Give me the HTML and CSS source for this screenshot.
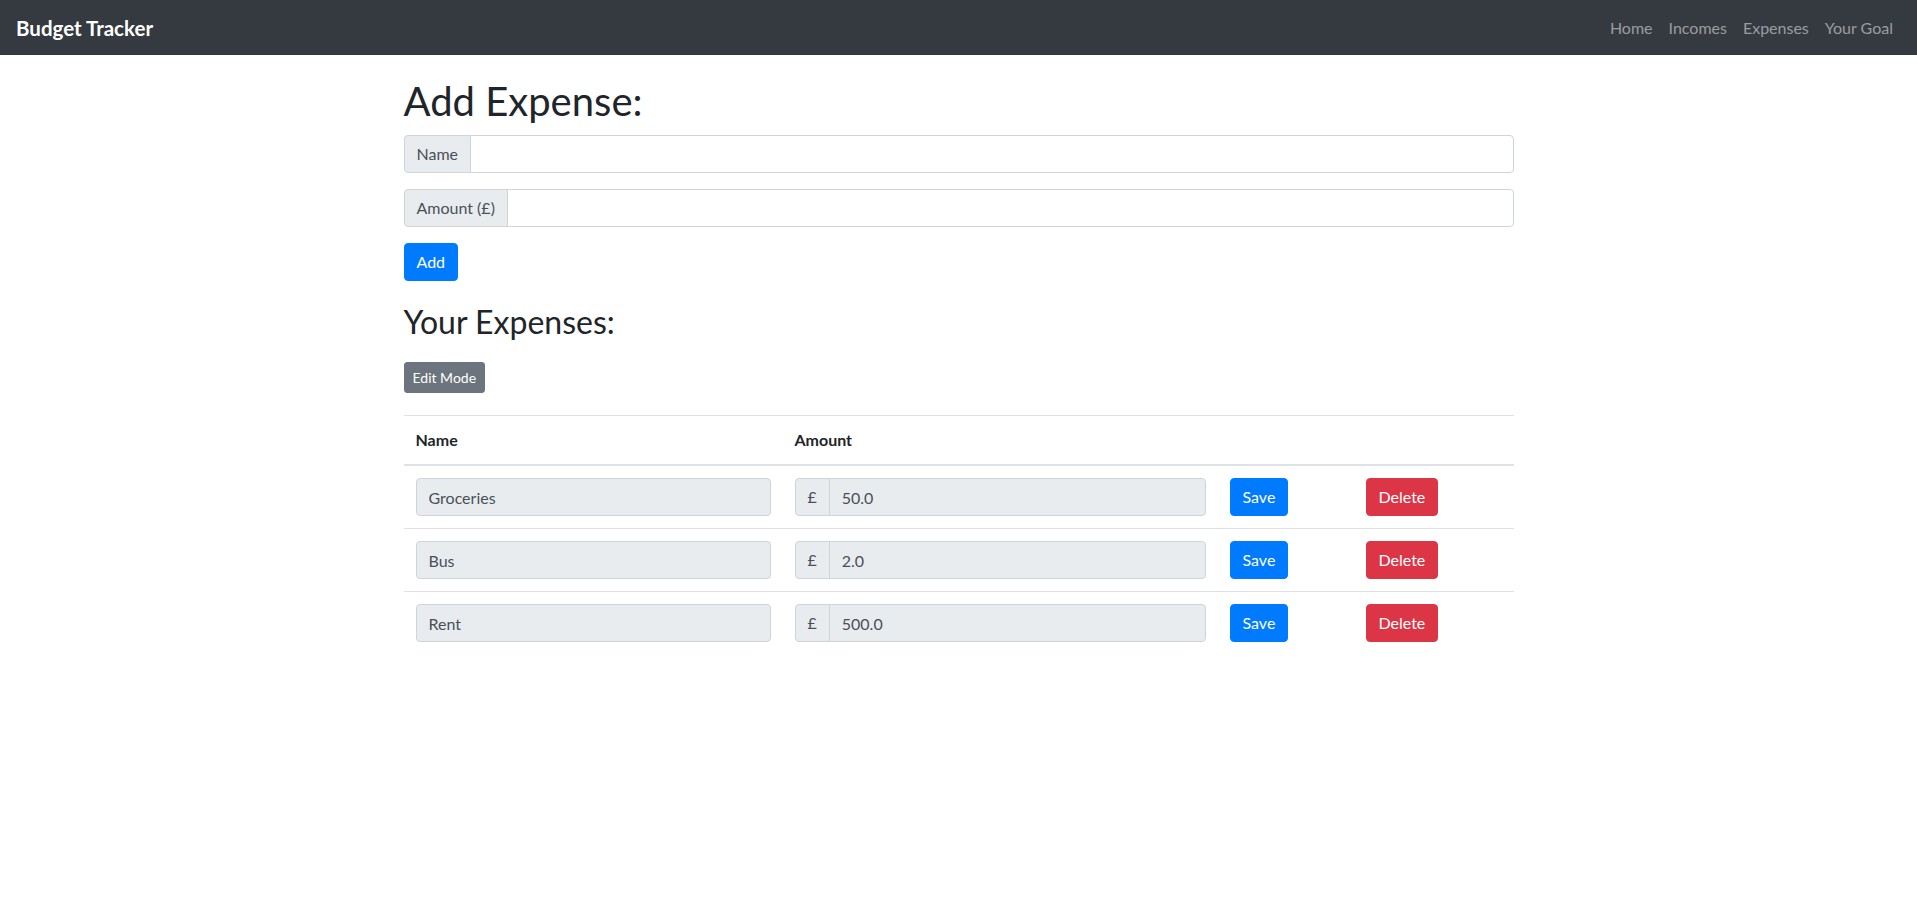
FILE: index.html
```html
<!DOCTYPE html>
<html lang="en">
<head>
<meta charset="utf-8">
<title>Budget Tracker</title>
<link rel="stylesheet" href="styles.css">
</head>
<body>
<nav class="navbar">
  <a class="brand" href="#">Budget Tracker</a>
  <ul class="nav">
    <li><a class="nav-link" href="#">Home</a></li>
    <li><a class="nav-link" href="#">Incomes</a></li>
    <li><a class="nav-link" href="#">Expenses</a></li>
    <li><a class="nav-link" href="#">Your Goal</a></li>
  </ul>
</nav>
<main class="container">
  <h1 class="title">Add Expense:</h1>
  <div class="input-group">
    <span class="addon">Name</span>
    <input class="control" type="text">
  </div>
  <div class="input-group">
    <span class="addon">Amount (£)</span>
    <input class="control" type="text">
  </div>
  <button class="btn btn-primary">Add</button>
  <h2 class="subtitle">Your Expenses:</h2>
  <button class="btn btn-secondary btn-sm">Edit Mode</button>
  <table class="table">
    <colgroup>
      <col class="col-name"><col class="col-amount"><col class="col-save"><col>
    </colgroup>
    <thead>
      <tr><th>Name</th><th>Amount</th><th></th><th></th></tr>
    </thead>
    <tbody>
      <tr>
        <td><input class="control ro" type="text" value="Groceries" readonly></td>
        <td><div class="input-group tight"><span class="addon">£</span><input class="control ro" type="text" value="50.0" readonly></div></td>
        <td><button class="btn btn-primary">Save</button></td>
        <td><button class="btn btn-danger">Delete</button></td>
      </tr>
      <tr>
        <td><input class="control ro" type="text" value="Bus" readonly></td>
        <td><div class="input-group tight"><span class="addon">£</span><input class="control ro" type="text" value="2.0" readonly></div></td>
        <td><button class="btn btn-primary">Save</button></td>
        <td><button class="btn btn-danger">Delete</button></td>
      </tr>
      <tr>
        <td><input class="control ro" type="text" value="Rent" readonly></td>
        <td><div class="input-group tight"><span class="addon">£</span><input class="control ro" type="text" value="500.0" readonly></div></td>
        <td><button class="btn btn-primary">Save</button></td>
        <td><button class="btn btn-danger">Delete</button></td>
      </tr>
    </tbody>
  </table>
</main>
</body>
</html>
```
FILE: styles.css
```css
*{box-sizing:border-box}
html,body{margin:0;padding:0}
body{font-family:Lato,"Open Sans",sans-serif;font-size:16px;line-height:1.5;color:#212529;background:#fff}

.navbar{display:flex;align-items:center;justify-content:space-between;height:55px;padding:8px 16px;background:#343a40}
.brand{color:#fff;font-size:20.5px;font-weight:700;line-height:30px;text-decoration:none}
.nav{display:flex;list-style:none;margin:0;padding:0}
.nav-link{display:block;padding:8px;color:rgba(255,255,255,.5);text-decoration:none;line-height:24px}

.container{width:1110px;margin:0 auto;padding-top:22px}
.title{font-size:40px;font-weight:400;line-height:1.2;margin:0 0 10px}
.subtitle{font-size:32px;font-weight:400;line-height:1.2;margin:22px 0 21px}

.input-group{display:flex;align-items:stretch;width:100%;margin-bottom:16px}
.input-group.tight{margin-bottom:0}
.addon{display:flex;align-items:center;padding:6px 12px;font-size:16px;line-height:24px;color:#495057;background:#e9ecef;border:1px solid #ced4da;border-radius:4px 0 0 4px;white-space:nowrap}
.control{display:block;flex:1 1 auto;width:100%;min-width:0;height:38px;padding:6px 12px;font-family:inherit;font-size:16px;line-height:24px;color:#495057;background:#fff;border:1px solid #ced4da;border-radius:4px;outline:none}
.input-group .control{border-radius:0 4px 4px 0;margin-left:-1px}
.control.ro{background:#e9ecef}

.btn{display:inline-block;font-family:inherit;font-size:16px;line-height:24px;padding:6px 12px;border:1px solid transparent;border-radius:4px;color:#fff;cursor:pointer;vertical-align:middle}
.btn-primary{background:#007bff;border-color:#007bff}
.btn-secondary{background:#6c757d;border-color:#6c757d}
.btn-danger{background:#dc3545;border-color:#dc3545}
.btn-sm{font-size:14px;line-height:21px;padding:4px 8px;border-radius:3px}

.table{width:100%;margin-top:22px;border-collapse:collapse;table-layout:fixed;color:#212529}
.col-name{width:379px}
.col-amount{width:435px}
.col-save{width:136px}
.table th,.table td{padding:12px;text-align:left;vertical-align:top;border-top:1px solid #dee2e6}
.table th{font-weight:700;vertical-align:bottom;line-height:24px}
.table thead th{border-bottom:2px solid #dee2e6}
```
